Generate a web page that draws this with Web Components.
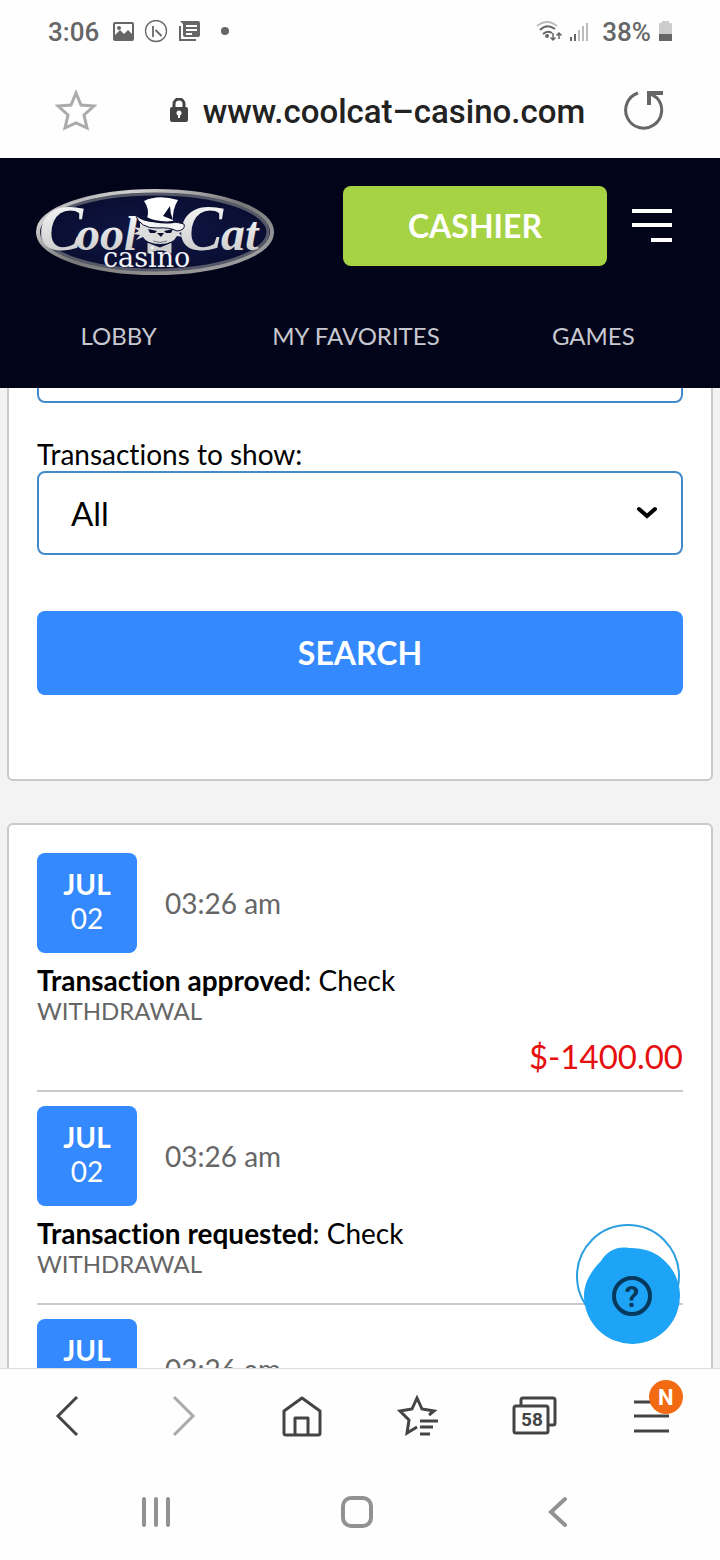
<!DOCTYPE html>
<html lang="en">
<head>
<meta charset="utf-8">
<meta name="viewport" content="width=device-width, initial-scale=1">
<title>Transaction history</title>
<style>
  * {
    box-sizing: border-box;
  }
  body {
    margin: 0;
    height: 100vh;
    display: flex;
    flex-direction: column;
    background: #fefefe;
    color: #000;
    font-family: Lato, "Liberation Sans", sans-serif;
    font-size: 28px;
    line-height: 34px;
    font-variant-ligatures: none;
    --accent: #3389fd;
    --line: #c9c9c9;
    --muted: #666;
    --radius: 8px;
    --system-font: Roboto, "Liberation Sans", sans-serif;
  }
</style>
</head>
<body>
  <status-bar time="3:06" battery="38%"></status-bar>
  <address-bar>www.coolcat–casino.com</address-bar>
  <site-header>
    <a href="#lobby">LOBBY</a>
    <a href="#favorites">MY FAVORITES</a>
    <a href="#games">GAMES</a>
  </site-header>
  <page-view>
    <transaction-search></transaction-search>
    <page-card>
      <transaction-item month="JUL" day="02" time="03:26 am" status="Transaction approved" method="Check" type="WITHDRAWAL" amount="$-1400.00"></transaction-item>
      <transaction-item month="JUL" day="02" time="03:26 am" status="Transaction requested" method="Check" type="WITHDRAWAL"></transaction-item>
      <transaction-item month="JUL" day="02" time="03:26 am"></transaction-item>
    </page-card>
    <help-button slot="overlay"></help-button>
  </page-view>
  <browser-toolbar tabs="58"></browser-toolbar>
  <system-nav></system-nav>

<script>
class StatusBar extends HTMLElement {
  constructor() {
    super();
    this.attachShadow({ mode: 'open' });
    this.shadowRoot.innerHTML = `
      <style>
        :host {
          display: flex;
          flex: none;
          align-items: center;
          justify-content: space-between;
          height: 64px;
          padding: 0 48px;
          color: #666;
          font: 500 26px/32px var(--system-font);
        }
        div {
          display: flex;
          align-items: center;
          gap: 12px;
        }
        .right {
          gap: 8px;
        }
        .right span {
          padding-left: 4px;
        }
        svg {
          display: block;
        }
      </style>
      <div>
        <span>${this.getAttribute('time')}</span>
        <svg width="120" height="24" viewBox="0 0 120 24" fill="#666">
          <path fill-rule="evenodd" d="M4 2h17a2 2 0 0 1 2 2v15a2 2 0 0 1-2 2H4a2 2 0 0 1-2-2V4a2 2 0 0 1 2-2zM4 4v11l5-5 4 4 4-4 4 4V4z"/>
          <circle cx="8" cy="8" r="2"/>
          <circle cx="45" cy="11" r="10.500" fill="none" stroke="#666" stroke-width="1.300"/>
          <path d="M42 6v11M44.500 10l6 6" fill="none" stroke="#666" stroke-width="1.800"/>
          <path fill-rule="evenodd" d="M69 1h18a2 2 0 0 1 2 2v12a2 2 0 0 1-2 2H74a2 2 0 0 1-2-2V4zM75 5v2h11V5zM75 9v2h11V9zM75 13v2h6v-2z"/>
          <path d="M69 6v14h16" fill="none" stroke="#666" stroke-width="2"/>
          <circle cx="114" cy="11" r="4"/>
        </svg>
      </div>
      <div class="right">
        <svg width="54" height="24" viewBox="0 0 54 24" fill="none">
          <path d="M1 6Q11-2 21 6" stroke="#bbb" stroke-width="2"/>
          <path d="M4 10Q11 3 19 9M7 14Q11 10 16 13" stroke="#666" stroke-width="2"/>
          <circle cx="11" cy="16" r="2" fill="#666"/>
          <path d="M17 13v7M14.500 17.500 17 20l2.500-2.500M23 19v-6M20.500 15.500 23 13l2.500 2.500" stroke="#666" stroke-width="1.500"/>
          <path d="M35 17v4M39 14v7" stroke="#666" stroke-width="2"/>
          <path d="M43 10v11M47 6v15M51 3v18" stroke="#bbb" stroke-width="2"/>
        </svg>
        <span>${this.getAttribute('battery')}</span>
        <svg width="13" height="24" viewBox="0 0 13 24">
          <path d="M3 3V1h7v2h2a1 1 0 0 1 1 1v10H0V4a1 1 0 0 1 1-1z" fill="#ccc"/>
          <path d="M0 14h13v7H0z" fill="#666"/>
        </svg>
      </div>
    `;
  }
}

class AddressBar extends HTMLElement {
  constructor() {
    super();
    this.attachShadow({ mode: 'open' });
    this.shadowRoot.innerHTML = `
      <style>
        :host {
          display: flex;
          flex: none;
          align-items: center;
          justify-content: space-between;
          height: 94px;
          padding: 0 55px;
          color: #222;
          font: 500 33px/40px var(--system-font);
        }
        button {
          display: block;
          padding: 0;
          border: 0;
          background: none;
        }
        svg {
          display: block;
        }
        .url {
          display: flex;
          align-items: center;
          gap: 14px;
          padding: 2px 0 0 34px;
        }
      </style>
      <button aria-label="Bookmark">
        <svg width="42" height="42" viewBox="0 0 42 42" fill="none" stroke="#aaa" stroke-width="3">
          <path d="M21 3l5 12 13 1-10 9 3 13-11-5-11 5 3-13-10-9 13-1z"/>
        </svg>
      </button>
      <div class="url">
        <svg width="20" height="28" viewBox="0 0 20 28">
          <path d="M5 10V6a5 5 0 0 1 10 0v4" fill="none" stroke="#444" stroke-width="3"/>
          <rect x="1" y="9" width="18" height="15" rx="2" fill="#444"/>
          <circle cx="10" cy="15" r="2.500" fill="#fff"/>
          <path d="M9 15h2v5H9z" fill="#fff"/>
        </svg>
        <span><slot></slot></span>
      </div>
      <button aria-label="Reload">
        <svg width="42" height="42" viewBox="0 0 42 42" fill="none" stroke="#666" stroke-width="3">
          <path d="M15 3a18 18 0 1 0 19 5L28 4"/>
          <path d="M26 15V3h14" stroke-width="4"/>
        </svg>
      </button>
    `;
  }
}

class SiteHeader extends HTMLElement {
  constructor() {
    super();
    this.attachShadow({ mode: 'open' });
    this.shadowRoot.innerHTML = `
      <style>
        :host {
          display: block;
          flex: none;
          padding: 24px 0 35px;
          background: #020419;
        }
        .top {
          display: flex;
          align-items: center;
          gap: 24px;
          height: 88px;
          padding: 0 47px 0 33px;
        }
        casino-logo {
          margin: 12px auto 0 0;
        }
        button {
          padding: 0;
          border: 0;
          background: none;
          color: #fff;
        }
        .cashier {
          width: 264px;
          height: 80px;
          border-radius: var(--radius);
          background: #a5d343;
          font: 700 32px/40px Lato, sans-serif;
        }
        svg {
          display: block;
        }
        nav {
          display: grid;
          grid-template-columns: repeat(3, 1fr);
          margin-top: 49px;
          padding-right: 8px;
        }
        ::slotted(a) {
          color: #c8c8d0;
          font-size: 24px;
          text-align: center;
          text-decoration: none;
        }
      </style>
      <div class="top">
        <casino-logo></casino-logo>
        <button class="cashier">CASHIER</button>
        <button aria-label="Menu">
          <svg width="42" height="36" viewBox="0 0 42 36" fill="#fff">
            <path d="M1 1h40v4H1zM1 15h40v4H1zM20 30h21v4H20z"/>
          </svg>
        </button>
      </div>
      <nav><slot></slot></nav>
    `;
  }
}

class CasinoLogo extends HTMLElement {
  constructor() {
    super();
    this.attachShadow({ mode: 'open' });
    this.shadowRoot.innerHTML = `
      <style>
        :host {
          display: block;
        }
        svg {
          display: block;
        }
        .script {
          font-family: "Liberation Serif", serif;
          font-size: 48px;
          font-style: italic;
          font-weight: 700;
        }
        .capital {
          font-size: 66px;
        }
        .sub {
          font-family: "DejaVu Serif", serif;
          font-size: 27px;
        }
      </style>
      <svg width="244" height="90" viewBox="0 0 244 90" role="img" aria-label="Cool Cat casino">
        <defs>
          <linearGradient id="silver" x2="0" y2="1">
            <stop offset="0" stop-color="#fff"/>
            <stop offset="1" stop-color="#c4c4c4"/>
          </linearGradient>
          <linearGradient id="rim" x2="1" y2="1">
            <stop offset="0" stop-color="#888"/>
            <stop offset=".2" stop-color="#d0d0d0"/>
            <stop offset=".5" stop-color="#777"/>
            <stop offset="1" stop-color="#aaa"/>
          </linearGradient>
          <radialGradient id="navy">
            <stop offset="0" stop-color="#111747"/>
            <stop offset="1" stop-color="#090d30"/>
          </radialGradient>
        </defs>
        <ellipse cx="122" cy="45" rx="117" ry="41" fill="url(#navy)" stroke="url(#rim)" stroke-width="4"/>
        <ellipse cx="122" cy="45" rx="113" ry="38" fill="none" stroke="#555866" stroke-width="3"/>
        <text class="script" x="6" y="63" fill="url(#silver)"><tspan class="capital">C</tspan></text>
        <text class="script" x="43" y="63" fill="url(#silver)">ool</text>
        <text class="script" x="146" y="63" fill="url(#silver)"><tspan class="capital">C</tspan></text>
        <text class="script" x="188" y="63" fill="url(#silver)">at</text>
        <path d="M107 36h42l-2 6 5 2-6 2 4 4-6-1q-4 8-17 8t-17-7l-7 3 4-5-7-1 6-3-6-4 7 1z" fill="#dcdcdc"/>
        <path d="M127 60l-13-5v12l10-3h6l9 3V55z" fill="#cfcfcf" stroke="#0b0e31"/>
        <path d="M102 27q6 8 24 8 15-1 25 2 2 6-7 7-8-4-19-3-18 1-23-14z" fill="#f4f4f4" stroke="#0b0e31"/>
        <path d="M114 32q3-10-3-18 14-7 34-1-6 10-5 21-13 4-26-2z" fill="#fff"/>
        <path d="M137 19l-7 10 10 4q-3-7-3-14zM115 42l9 2-2 2h-5zM140 42l-9 2 2 2h5zM124 46h7l-3 4z" fill="#0b0e31"/>
        <path d="M109 22q-2 5 5 6M113 31q12 6 28 4" fill="none" stroke="#0b0e31" stroke-width="2"/>
        <path d="M120 54q7 3 14 0" fill="none" stroke="#777"/>
        <text class="sub" x="70" y="80" fill="#f4f4f4">casino</text>
      </svg>
    `;
  }
}

class PageView extends HTMLElement {
  constructor() {
    super();
    this.attachShadow({ mode: 'open' });
    this.shadowRoot.innerHTML = `
      <style>
        :host {
          position: relative;
          display: block;
          flex: 1;
          min-height: 0;
          overflow: hidden;
          background: #f3f3f3;
        }
        /* the page sits part-way down its scroll */
        main {
          display: flex;
          flex-direction: column;
          gap: 42px;
          margin-top: -99px;
          padding: 0 7px;
        }
        ::slotted(help-button) {
          position: absolute;
          right: 39px;
          bottom: 23px;
        }
      </style>
      <main><slot></slot></main>
      <slot name="overlay"></slot>
    `;
  }
}

class PageCard extends HTMLElement {
  constructor() {
    super();
    this.attachShadow({ mode: 'open' });
    this.shadowRoot.innerHTML = `
      <style>
        :host {
          display: block;
          padding: 28px;
          border: 2px solid var(--line);
          border-radius: 6px;
          background: #fff;
        }
      </style>
      <slot></slot>
    `;
  }
}

class TransactionSearch extends HTMLElement {
  constructor() {
    super();
    this.attachShadow({ mode: 'open' });
    this.shadowRoot.innerHTML = `
      <style>
        :host {
          display: block;
        }
        form {
          display: flex;
          flex-direction: column;
          margin-bottom: 56px;
        }
        label {
          display: block;
          margin-top: 34px;
        }
        select, button {
          box-sizing: border-box;
          width: 100%;
          height: 84px;
          border-radius: var(--radius);
          font: 400 33px/40px Lato, sans-serif;
        }
        select {
          grid-area: 1 / 1;
          appearance: none;
          padding: 0 32px;
          border: 2px solid #428bca;
          background: #fff;
          color: #000;
        }
        .field {
          display: grid;
          align-items: center;
        }
        .field svg {
          grid-area: 1 / 1;
          justify-self: end;
          margin-right: 24px;
          pointer-events: none;
        }
        button {
          margin-top: 56px;
          border: 0;
          background: var(--accent);
          color: #fff;
          font-size: 32px;
          font-weight: 700;
        }
      </style>
      <page-card>
        <form>
          <div class="field">
            <select aria-label="Period"></select>
          </div>
          <label for="show">Transactions to show:</label>
          <div class="field">
            <select id="show"><option>All</option></select>
            <svg width="24" height="16" viewBox="0 0 24 16" fill="none" stroke="#000" stroke-width="4" stroke-linecap="round">
              <path d="M4 4l8 7 8-7"/>
            </svg>
          </div>
          <button type="button">SEARCH</button>
        </form>
      </page-card>
    `;
  }
}

class TransactionItem extends HTMLElement {
  constructor() {
    super();
    this.attachShadow({ mode: 'open' });
    this.render();
  }

  render() {
    var status = this.getAttribute('status');
    var amount = this.getAttribute('amount');

    this.shadowRoot.innerHTML = `
      <style>
        :host {
          display: block;
          margin-bottom: 14px;
          padding-bottom: 14px;
          border-bottom: 2px solid var(--line);
        }
        .when {
          display: flex;
          align-items: center;
          gap: 28px;
          margin-bottom: 10px;
          color: var(--muted);
        }
        .date {
          display: flex;
          flex-direction: column;
          box-sizing: border-box;
          width: 100px;
          height: 100px;
          padding-top: 14px;
          border-radius: var(--radius);
          background: var(--accent);
          color: #fff;
          text-align: center;
        }
        .type {
          margin-bottom: 11px;
          color: var(--muted);
          font-size: 24px;
          line-height: 28px;
        }
        .amount {
          color: #e60f0f;
          font-size: 33px;
          line-height: 40px;
          text-align: right;
        }
      </style>
      <div class="when">
        <div class="date">
          <b>${this.getAttribute('month')}</b>
          <span>${this.getAttribute('day')}</span>
        </div>
        <span>${this.getAttribute('time')}</span>
      </div>
      ${status ? `
        <div><b>${status}</b>: ${this.getAttribute('method')}</div>
        <div class="type">${this.getAttribute('type')}</div>
      ` : ''}
      ${amount ? `<div class="amount">${amount}</div>` : ''}
    `;
  }
}

class HelpButton extends HTMLElement {
  constructor() {
    super();
    this.attachShadow({ mode: 'open' });
    this.shadowRoot.innerHTML = `
      <style>
        :host {
          display: block;
        }
        button {
          display: block;
          padding: 0;
          border: 0;
          background: none;
        }
        svg {
          display: block;
        }
        text {
          font: 700 29px var(--system-font);
        }
      </style>
      <button aria-label="Help">
        <svg width="106" height="122" viewBox="0 0 106 122">
          <circle cx="53" cy="53" r="51" fill="#fff" stroke="#2b9fe0" stroke-width="2"/>
          <path d="M9 73c0-15 9-27 17-35 6-9 14-15 28-13a48 48 0 1 1-45 48z" fill="#1ea4f6"/>
          <circle cx="57" cy="73" r="18" fill="none" stroke="#06395c" stroke-width="4"/>
          <text x="57" y="84" text-anchor="middle" fill="#06395c">?</text>
        </svg>
      </button>
    `;
  }
}

class BrowserToolbar extends HTMLElement {
  constructor() {
    super();
    this.attachShadow({ mode: 'open' });
    this.shadowRoot.innerHTML = `
      <style>
        :host {
          display: grid;
          flex: none;
          grid-template-columns: repeat(6, 1fr);
          place-items: center;
          height: 96px;
          box-sizing: border-box;
          padding: 0 10px 2px;
          border-top: 1px solid #ddd;
        }
        button {
          position: relative;
          display: block;
          padding: 0;
          border: 0;
          background: none;
        }
        svg {
          display: block;
          fill: none;
          stroke: #444;
          stroke-width: 3;
        }
        text {
          fill: #444;
          stroke: none;
          font: 700 19px var(--system-font);
        }
        .badge {
          position: absolute;
          top: -14px;
          right: -9px;
          width: 34px;
          height: 34px;
          border-radius: 50%;
          background: #f26a11;
          color: #fff;
          font: 700 22px/35px var(--system-font);
          text-align: center;
        }
      </style>
      <button aria-label="Back">
        <svg width="44" height="44" viewBox="0 0 44 44"><path d="M31 3L12 22l19 19"/></svg>
      </button>
      <button aria-label="Forward">
        <svg width="44" height="44" viewBox="0 0 44 44" style="stroke:#aaa"><path d="M11 3l19 19-19 19"/></svg>
      </button>
      <button aria-label="Home">
        <svg width="44" height="44" viewBox="0 0 44 44" stroke-linejoin="round">
          <path d="M4 17L22 4l18 13v22q0 2-2 2H6q-2 0-2-2zM15 40V24h13v16"/>
        </svg>
      </button>
      <button aria-label="Bookmarks">
        <svg width="44" height="44" viewBox="0 0 44 44">
          <path d="M33 21l5-4-12-2-5-11-5 11-12 2 9 9-2 13 10-6"/>
          <path d="M24 27h18M24 33h13M24 40h10"/>
        </svg>
      </button>
      <button aria-label="Tabs">
        <svg width="46" height="44" viewBox="0 0 46 44">
          <rect x="2" y="12" width="34" height="27" rx="2"/>
          <path d="M9 11V6q0-2 2-2h30q2 0 2 2v23q0 2-2 2h-4"/>
          <text x="20" y="32" text-anchor="middle">${this.getAttribute('tabs')}</text>
        </svg>
      </button>
      <button aria-label="Menu, new items">
        <svg width="44" height="44" viewBox="0 0 44 44"><path d="M4 8h35M4 22h35M4 37h35"/></svg>
        <span class="badge">N</span>
      </button>
    `;
  }
}

class SystemNav extends HTMLElement {
  constructor() {
    super();
    this.attachShadow({ mode: 'open' });
    this.shadowRoot.innerHTML = `
      <style>
        :host {
          display: grid;
          flex: none;
          grid-template-columns: repeat(3, 1fr);
          place-items: center;
          height: 96px;
          box-sizing: border-box;
          padding: 0 61px 0 55px;
        }
        button {
          display: block;
          padding: 0;
          border: 0;
          background: none;
        }
        svg {
          display: block;
          fill: none;
          stroke: #929292;
          stroke-width: 4;
          stroke-linecap: round;
        }
      </style>
      <button aria-label="Recent apps">
        <svg width="34" height="34" viewBox="0 0 34 34"><path d="M5 4v26M17 4v26M29 4v26"/></svg>
      </button>
      <button aria-label="Home screen">
        <svg width="34" height="34" viewBox="0 0 34 34"><rect x="3" y="3" width="28" height="28" rx="8"/></svg>
      </button>
      <button aria-label="Go back">
        <svg width="34" height="34" viewBox="0 0 34 34"><path d="M24 4L10 17l14 13"/></svg>
      </button>
    `;
  }
}

customElements.define('status-bar', StatusBar);
customElements.define('address-bar', AddressBar);
customElements.define('casino-logo', CasinoLogo);
customElements.define('site-header', SiteHeader);
customElements.define('page-view', PageView);
customElements.define('page-card', PageCard);
customElements.define('transaction-search', TransactionSearch);
customElements.define('transaction-item', TransactionItem);
customElements.define('help-button', HelpButton);
customElements.define('browser-toolbar', BrowserToolbar);
customElements.define('system-nav', SystemNav);
</script>
</body>
</html>
